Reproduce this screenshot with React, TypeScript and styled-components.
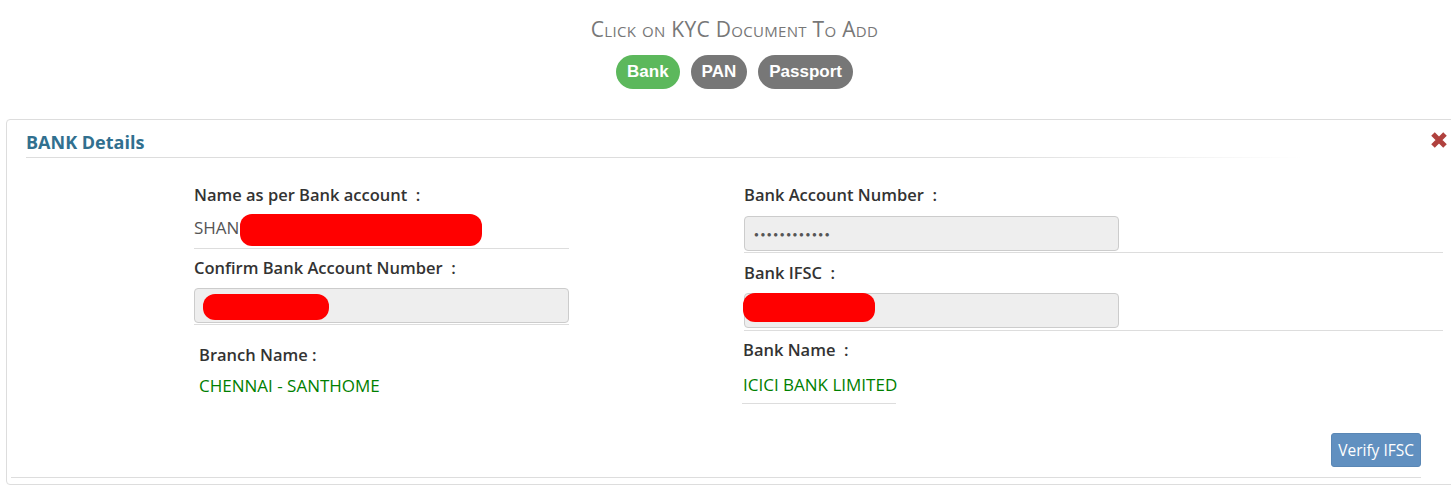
import styled, { createGlobalStyle } from 'styled-components'

const GlobalStyle = createGlobalStyle`
  body {
    margin: 0;
    background: #fff;
    font-family: 'Open Sans', 'Noto Sans', sans-serif;
    overflow: hidden;
  }
`

const Page = styled.div`
  width: 1451px;
  height: 497px;
  overflow: hidden;
`

const Header = styled.div`
  display: flex;
  flex-direction: column;
  align-items: center;
  padding: 16px 0 0 18px;
`

const Caption = styled.div`
  font-variant: small-caps;
  font-size: 21px;
  line-height: 26px;
  color: #777;
  letter-spacing: 0.3px;
`

const Pills = styled.div`
  display: flex;
  gap: 11px;
  margin-top: 13px;
`

const Pill = styled.span<{ $active?: boolean }>`
  display: inline-flex;
  align-items: center;
  height: 34px;
  padding: 0 11px;
  border-radius: 17px;
  background: ${({ $active }) => ($active ? '#5cb85c' : '#777')};
  color: #fff;
  font-family: 'Liberation Sans', Arial, sans-serif;
  font-weight: bold;
  font-size: 17px;
`

const Panel = styled.div`
  margin: 30px -12px 0 6px;
  height: 364px;
  border: 1px solid #ddd;
  border-radius: 4px;
  padding: 0 20px 0 19px;
  display: flex;
  flex-direction: column;
`

const TitleRow = styled.div`
  display: flex;
  align-items: center;
  padding-top: 6px;
  height: 31px;
  border-bottom: 1px solid;
  border-image: linear-gradient(to right, #ddd 75%, #fff) 1;
  margin-right: 140px;
`

const Title = styled.h3`
  margin: 0;
  font-size: 18px;
  font-weight: 700;
  color: #31708f;
`

const Close = styled.svg`
  position: absolute;
  top: 131px;
  left: 1430px;
`

const Columns = styled.div`
  display: grid;
  grid-template-columns: 375px 699px;
  column-gap: 175px;
  padding-left: 168px;
  padding-top: 26px;
`

const Column = styled.div`
  display: flex;
  flex-direction: column;
`

const Label = styled.div<{ $indent?: number }>`
  font-size: 16.5px;
  font-weight: 600;
  color: #333;
  line-height: 22px;
  padding-left: ${({ $indent }) => $indent ?? 0}px;
  white-space: pre;
`

const Field = styled.div<{ $width?: number }>`
  position: relative;
  border-bottom: 1px solid #ddd;
  width: ${({ $width }) => ($width ? `${$width}px` : 'auto')};
`

const ValueText = styled.div<{ $green?: boolean; $height: number; $indent?: number }>`
  height: ${({ $height }) => $height}px;
  display: flex;
  align-items: center;
  font-size: 17px;
  white-space: nowrap;
  color: ${({ $green }) => ($green ? '#008000' : '#555')};
  padding-left: ${({ $indent }) => $indent ?? 0}px;
`

const InputBox = styled.div`
  width: 375px;
  height: 35px;
  background: #eee;
  border: 1px solid #ccc;
  border-radius: 4px;
  display: flex;
  align-items: center;
  padding-left: 9px;
  box-sizing: border-box;
  color: #555;
`

const Redact = styled.div<{ $left: number; $top: number; $w: number; $h: number }>`
  position: absolute;
  left: ${({ $left }) => $left}px;
  top: ${({ $top }) => $top}px;
  width: ${({ $w }) => $w}px;
  height: ${({ $h }) => $h}px;
  background: #ff0000;
  border-radius: 12px;
`

const Footer = styled.div`
  display: flex;
  justify-content: flex-end;
  margin-top: auto;
  border-bottom: 1px solid #ddd;
  margin-left: -15px;
  margin-right: 21px;
  padding-bottom: 10px;
  margin-bottom: 6px;
`

const VerifyButton = styled.button`
  background: #6190c0;
  color: #fff;
  border: 1px solid #5a87b5;
  border-radius: 3px;
  height: 34px;
  padding: 0 6px;
  font-family: 'Open Sans', 'Noto Sans', sans-serif;
  font-size: 15.5px;
`

const Dots = styled.span`
  font-size: 8px;
  letter-spacing: 1.6px;
`

export default function App() {
  return (
    <Page>
      <GlobalStyle />
      <Header>
        <Caption>Click on KYC Document To Add</Caption>
        <Pills>
          <Pill $active>Bank</Pill>
          <Pill>PAN</Pill>
          <Pill>Passport</Pill>
        </Pills>
      </Header>

      <Panel>
        <TitleRow>
          <Title>BANK Details</Title>
        </TitleRow>
        <Close width='18' height='18' viewBox='0 0 18 18'>
          <path d='M3 3 L15 15 M15 3 L3 15' stroke='#b0413e' strokeWidth='5' strokeLinecap='butt' />
        </Close>

        <Columns>
          <Column>
            <Label>{'Name as per Bank account  :'}</Label>
            <Field>
              <ValueText $height={42}>SHAN</ValueText>
              <Redact $left={46} $top={8} $w={242} $h={32} />
            </Field>
            <Label style={{ marginTop: 8 }}>{'Confirm Bank Account Number  :'}</Label>
            <Field style={{ paddingTop: 9, paddingBottom: 1 }}>
              <InputBox />
              <Redact $left={9} $top={15} $w={126} $h={26} />
            </Field>
            <Label $indent={5} style={{ marginTop: 19 }}>
              {'Branch Name :'}
            </Label>
            <ValueText $green $height={38} $indent={5}>
              CHENNAI - SANTHOME
            </ValueText>
          </Column>

          <Column>
            <Label>{'Bank Account Number  :'}</Label>
            <Field style={{ paddingTop: 10, paddingBottom: 1 }}>
              <InputBox>
                <Dots>●●●●●●●●●●●●</Dots>
              </InputBox>
            </Field>
            <Label style={{ marginTop: 9 }}>{'Bank IFSC  :'}</Label>
            <Field style={{ paddingTop: 9, paddingBottom: 2 }}>
              <InputBox />
              <Redact $left={-1} $top={9} $w={132} $h={29} />
            </Field>
            <Label style={{ marginTop: 8, marginLeft: -1 }}>{'Bank Name  :'}</Label>
            <Field $width={154} style={{ marginLeft: -2, marginTop: 4 }}>
              <ValueText $green $height={38} $indent={1}>
                ICICI BANK LIMITED
              </ValueText>
            </Field>
          </Column>
        </Columns>

        <Footer>
          <VerifyButton>Verify IFSC</VerifyButton>
        </Footer>
      </Panel>
    </Page>
  )
}
